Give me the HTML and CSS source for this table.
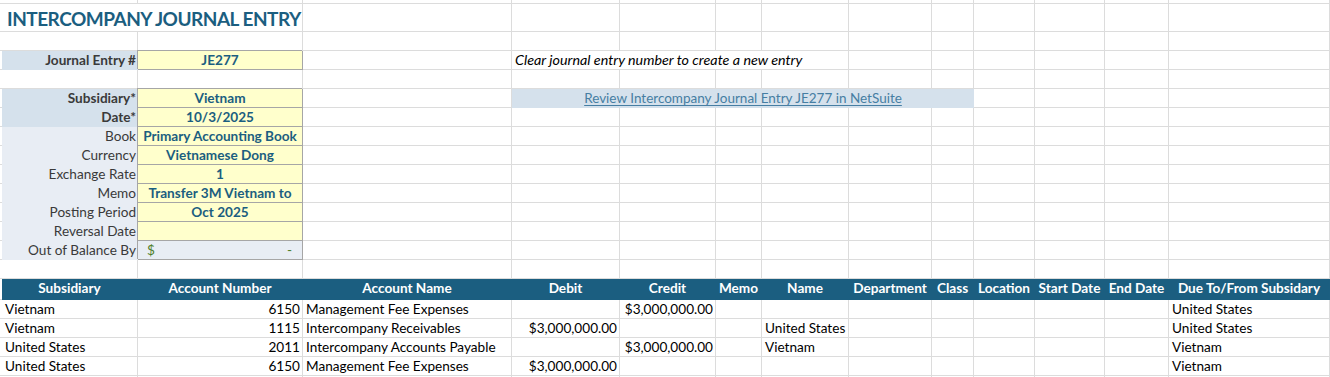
FILE: index.html
```html
<!DOCTYPE html>
<html lang="en">
<head>
<meta charset="utf-8">
<title>Intercompany Journal Entry</title>
<link rel="stylesheet" href="styles.css">
</head>
<body>
<div class="sheet">
  <div class="row r-top">
    <div class="c c0"></div><div class="c"></div><div class="c"></div><div class="c"></div><div class="c"></div><div class="c"></div><div class="c"></div><div class="c"></div><div class="c"></div><div class="c"></div><div class="c"></div><div class="c"></div><div class="c"></div><div class="c"></div>
  </div>
  <div class="row r-title">
    <div class="c c0"></div><div class="c title span2">INTERCOMPANY JOURNAL ENTRY</div><div class="c"></div><div class="c"></div><div class="c"></div><div class="c"></div><div class="c"></div><div class="c"></div><div class="c"></div><div class="c"></div><div class="c"></div><div class="c"></div><div class="c"></div>
  </div>
  <div class="row">
    <div class="c c0"></div><div class="c"></div><div class="c"></div><div class="c"></div><div class="c"></div><div class="c"></div><div class="c"></div><div class="c"></div><div class="c"></div><div class="c"></div><div class="c"></div><div class="c"></div><div class="c"></div><div class="c"></div>
  </div>
  <div class="row">
    <div class="c c0"></div><div class="c lab dark">Journal Entry #</div><div class="c val">JE277</div><div class="c"></div><div class="c note span4">Clear journal entry number to create a new entry</div><div class="c"></div><div class="c"></div><div class="c"></div><div class="c"></div><div class="c"></div><div class="c"></div>
  </div>
  <div class="row">
    <div class="c c0"></div><div class="c"></div><div class="c"></div><div class="c"></div><div class="c"></div><div class="c"></div><div class="c"></div><div class="c"></div><div class="c"></div><div class="c"></div><div class="c"></div><div class="c"></div><div class="c"></div><div class="c"></div>
  </div>
  <div class="row">
    <div class="c c0"></div><div class="c lab dark">Subsidiary*</div><div class="c val">Vietnam</div><div class="c"></div><div class="c link span6"><span class="lnk">Review Intercompany Journal Entry JE277 in NetSuite</span></div><div class="c"></div><div class="c"></div><div class="c"></div><div class="c"></div>
  </div>
  <div class="row">
    <div class="c c0"></div><div class="c lab dark">Date*</div><div class="c val">10/3/2025</div><div class="c"></div><div class="c"></div><div class="c"></div><div class="c"></div><div class="c"></div><div class="c"></div><div class="c"></div><div class="c"></div><div class="c"></div><div class="c"></div><div class="c"></div>
  </div>
  <div class="row">
    <div class="c c0"></div><div class="c lab light">Book</div><div class="c val">Primary Accounting Book</div><div class="c"></div><div class="c"></div><div class="c"></div><div class="c"></div><div class="c"></div><div class="c"></div><div class="c"></div><div class="c"></div><div class="c"></div><div class="c"></div><div class="c"></div>
  </div>
  <div class="row">
    <div class="c c0"></div><div class="c lab light">Currency</div><div class="c val">Vietnamese Dong</div><div class="c"></div><div class="c"></div><div class="c"></div><div class="c"></div><div class="c"></div><div class="c"></div><div class="c"></div><div class="c"></div><div class="c"></div><div class="c"></div><div class="c"></div>
  </div>
  <div class="row">
    <div class="c c0"></div><div class="c lab light">Exchange Rate</div><div class="c val">1</div><div class="c"></div><div class="c"></div><div class="c"></div><div class="c"></div><div class="c"></div><div class="c"></div><div class="c"></div><div class="c"></div><div class="c"></div><div class="c"></div><div class="c"></div>
  </div>
  <div class="row">
    <div class="c c0"></div><div class="c lab light">Memo</div><div class="c val">Transfer 3M Vietnam to</div><div class="c"></div><div class="c"></div><div class="c"></div><div class="c"></div><div class="c"></div><div class="c"></div><div class="c"></div><div class="c"></div><div class="c"></div><div class="c"></div><div class="c"></div>
  </div>
  <div class="row">
    <div class="c c0"></div><div class="c lab light">Posting Period</div><div class="c val">Oct 2025</div><div class="c"></div><div class="c"></div><div class="c"></div><div class="c"></div><div class="c"></div><div class="c"></div><div class="c"></div><div class="c"></div><div class="c"></div><div class="c"></div><div class="c"></div>
  </div>
  <div class="row">
    <div class="c c0"></div><div class="c lab light">Reversal Date</div><div class="c val"></div><div class="c"></div><div class="c"></div><div class="c"></div><div class="c"></div><div class="c"></div><div class="c"></div><div class="c"></div><div class="c"></div><div class="c"></div><div class="c"></div><div class="c"></div>
  </div>
  <div class="row">
    <div class="c c0"></div><div class="c lab light">Out of Balance By</div><div class="c oob"><span>$</span><span>-</span></div><div class="c"></div><div class="c"></div><div class="c"></div><div class="c"></div><div class="c"></div><div class="c"></div><div class="c"></div><div class="c"></div><div class="c"></div><div class="c"></div><div class="c"></div>
  </div>
  <div class="row">
    <div class="c c0"></div><div class="c"></div><div class="c"></div><div class="c"></div><div class="c"></div><div class="c"></div><div class="c"></div><div class="c"></div><div class="c"></div><div class="c"></div><div class="c"></div><div class="c"></div><div class="c"></div><div class="c"></div>
  </div>
  <div class="row r-head">
    <div class="c c0"></div><div class="c h">Subsidiary</div><div class="c h">Account Number</div><div class="c h">Account Name</div><div class="c h">Debit</div><div class="c h">Credit</div><div class="c h">Memo</div><div class="c h">Name</div><div class="c h">Department</div><div class="c h">Class</div><div class="c h">Location</div><div class="c h">Start Date</div><div class="c h">End Date</div><div class="c h">Due To/From Subsidary</div>
  </div>
  <div class="row">
    <div class="c c0"></div><div class="c">Vietnam</div><div class="c r">6150</div><div class="c">Management Fee Expenses</div><div class="c r"></div><div class="c r">$3,000,000.00</div><div class="c"></div><div class="c"></div><div class="c"></div><div class="c"></div><div class="c"></div><div class="c"></div><div class="c"></div><div class="c">United States</div>
  </div>
  <div class="row">
    <div class="c c0"></div><div class="c">Vietnam</div><div class="c r">1115</div><div class="c">Intercompany Receivables</div><div class="c r">$3,000,000.00</div><div class="c r"></div><div class="c"></div><div class="c">United States</div><div class="c"></div><div class="c"></div><div class="c"></div><div class="c"></div><div class="c"></div><div class="c">United States</div>
  </div>
  <div class="row">
    <div class="c c0"></div><div class="c">United States</div><div class="c r">2011</div><div class="c">Intercompany Accounts Payable</div><div class="c r"></div><div class="c r">$3,000,000.00</div><div class="c"></div><div class="c">Vietnam</div><div class="c"></div><div class="c"></div><div class="c"></div><div class="c"></div><div class="c"></div><div class="c">Vietnam</div>
  </div>
  <div class="row">
    <div class="c c0"></div><div class="c">United States</div><div class="c r">6150</div><div class="c">Management Fee Expenses</div><div class="c r">$3,000,000.00</div><div class="c r"></div><div class="c"></div><div class="c"></div><div class="c"></div><div class="c"></div><div class="c"></div><div class="c"></div><div class="c"></div><div class="c">Vietnam</div>
  </div>
  <div class="row r-end">
    <div class="c c0"></div><div class="c"></div><div class="c"></div><div class="c"></div><div class="c"></div><div class="c"></div><div class="c"></div><div class="c"></div><div class="c"></div><div class="c"></div><div class="c"></div><div class="c"></div><div class="c"></div><div class="c"></div>
  </div>
</div>
</body>
</html>
```

FILE: styles.css
```css
* { box-sizing: border-box; }

html, body {
  margin: 0;
  background: #ffffff;
}

body {
  font-family: Lato, "Liberation Sans", Arial, sans-serif;
  font-size: 13.6px;
  color: #000000;
}

.sheet {
  display: flex;
  flex-direction: column;
  width: 1330px;
  height: 377px;
  overflow: hidden;
}

.row {
  display: grid;
  grid-template-columns: 2px 136px 165px 209px 108px 96px 46px 87px 83px 42px 61px 70px 64px 161px;
  height: 19px;
  flex: none;
}
.r-top { height: 4px; }
.r-title { height: 28px; }
.r-head { height: 21px; }
.r-end { height: 2px; }

.c {
  border-right: 1px solid #dcdcdc;
  border-bottom: 1px solid #dcdcdc;
  white-space: nowrap;
  overflow: hidden;
  display: flex;
  align-items: flex-end;
  padding: 0 2px 0 3px;
  line-height: 17px;
  min-width: 0;
}

.c0 { border-right: none; padding: 0; }

.r { justify-content: flex-end; }

.span2 { grid-column: span 2; }
.span4 { grid-column: span 4; }
.span6 { grid-column: span 6; }

.title {
  font-size: 19px;
  letter-spacing: -0.5px;
  font-weight: 700;
  color: #1b5e80;
  line-height: 24px;
  padding: 0 0 0 5px;
  overflow: visible;
}

.lab {
  justify-content: flex-end;
  color: #3a3a3a;
  border-color: transparent;
  padding-right: 1px;
}
.lab.dark { background: #d5e1ec; font-weight: 700; }
.lab.light { background: #e8edf4; }

.val {
  background: #ffffcc;
  border-color: #a6a6a6;
  box-shadow: -1px -1px 0 #a6a6a6;
  justify-content: center;
  color: #1b5e80;
  font-weight: 700;
  padding: 0 2px;
}

.oob {
  background: #e8edf4;
  border-color: #a6a6a6;
  box-shadow: -1px -1px 0 #a6a6a6;
  justify-content: space-between;
  color: #4f7f2a;
  padding: 0 10px 0 9px;
}

.note {
  font-style: italic;
  font-size: 14.3px;
  overflow: visible;
  padding-bottom: 1px;
}

.link {
  background: #d5e1ec;
  border-color: transparent;
  justify-content: center;
}
.lnk {
  color: #467ea3;
  font-size: 13.5px;
  text-decoration: underline;
  text-underline-offset: 2px;
}

.h {
  background: #1b5e80;
  color: #ffffff;
  font-weight: 700;
  justify-content: center;
  border-color: transparent;
  padding: 0 1px 2px;
  overflow: visible;
}
```
